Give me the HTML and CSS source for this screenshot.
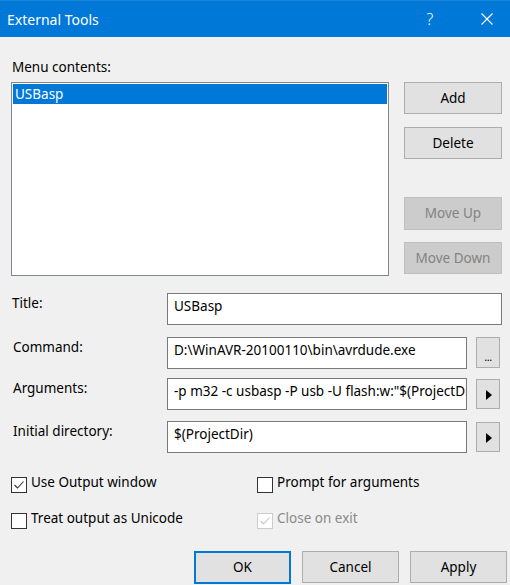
FILE: index.html
```html
<!DOCTYPE html>
<html>
<head>
<meta charset="utf-8">
<title>External Tools</title>
<link rel="stylesheet" href="styles.css">
</head>
<body>
<div class="dialog">
  <div class="titlebar">
    <span class="title">External Tools</span>
    <span class="help">?</span>
    <span class="close">
      <svg width="12" height="12" viewBox="0 0 12 12"><path d="M0.5 0.5 L11.5 11.5 M11.5 0.5 L0.5 11.5" stroke="#fff" stroke-width="1.1" fill="none"/></svg>
    </span>
  </div>
  <div class="content">
    <div class="menu-label">Menu contents:</div>
    <div class="menu-row">
      <div class="listbox">
        <div class="item selected">USBasp</div>
      </div>
      <div class="side-buttons">
        <button class="btn">Add</button>
        <button class="btn btn-delete">Delete</button>
        <button class="btn disabled btn-up">Move Up</button>
        <button class="btn disabled btn-down">Move Down</button>
      </div>
    </div>

    <div class="form">
      <div class="row">
        <div class="label label-title">Title:</div>
        <div class="field wide">USBasp</div>
      </div>
      <div class="row row-command">
        <div class="label">Command:</div>
        <div class="field narrow">D:\WinAVR-20100110\bin\avrdude.exe</div>
        <button class="small-btn dots">...</button>
      </div>
      <div class="row row-args">
        <div class="label">Arguments:</div>
        <div class="field narrow">-p m32 -c usbasp -P usb -U flash:w:"$(ProjectDir)Default\$(ProjectName).hex":i</div>
        <button class="small-btn arrow-btn"><svg width="6" height="10" viewBox="0 0 6 10"><path d="M0 0 L6 5 L0 10 Z" fill="#000"/></svg></button>
      </div>
      <div class="row row-dir">
        <div class="label">Initial directory:</div>
        <div class="field narrow">$(ProjectDir)</div>
        <button class="small-btn arrow-btn"><svg width="6" height="10" viewBox="0 0 6 10"><path d="M0 0 L6 5 L0 10 Z" fill="#000"/></svg></button>
      </div>
    </div>

    <div class="checks">
      <div class="check">
        <span class="box"><svg width="14" height="14" viewBox="0 0 14 14"><path d="M2.5 7 L5.5 10 L11.5 3.5" stroke="#333" stroke-width="1.1" fill="none"/></svg></span>
        <span>Use Output window</span>
      </div>
      <div class="check">
        <span class="box"></span>
        <span>Prompt for arguments</span>
      </div>
      <div class="check">
        <span class="box"></span>
        <span>Treat output as Unicode</span>
      </div>
      <div class="check check-disabled">
        <span class="box"><svg width="14" height="14" viewBox="0 0 14 14"><path d="M2.5 7 L5.5 10 L11.5 3.5" stroke="#c4c4c4" stroke-width="1.1" fill="none"/></svg></span>
        <span>Close on exit</span>
      </div>
    </div>

    <div class="footer">
      <button class="btn foot-btn default">OK</button>
      <button class="btn foot-btn">Cancel</button>
      <button class="btn foot-btn">Apply</button>
    </div>
  </div>
</div>
</body>
</html>
```

FILE: styles.css
```css
html, body {
  margin: 0;
  padding: 0;
  background: #f0f0f0;
}

.dialog {
  width: 510px;
  height: 585px;
  overflow: hidden;
  background: #f0f0f0;
  font-family: "Noto Sans", "Open Sans", sans-serif;
  font-size: 13.5px;
  line-height: 19px;
  color: #000;
}

.titlebar {
  height: 36px;
  border-top: 1px solid #1a84d9;
  background: #0078d7;
  color: #fff;
  display: flex;
  align-items: center;
  font-size: 14px;
}

.title {
  flex: 1;
  margin-left: 7px;
}

.help {
  width: 46px;
  text-align: center;
  font-size: 16px;
  font-weight: 300;
}

.close {
  width: 46px;
  margin-left: 11px;
  display: flex;
  justify-content: center;
  align-items: center;
}

.content {
  padding: 0 3px 0 11px;
}

.menu-label {
  margin-top: 21px;
  padding-left: 1px;
}

.menu-row {
  display: flex;
  margin-top: 5px;
  height: 194px;
}

.listbox {
  box-sizing: border-box;
  width: 378px;
  height: 194px;
  border: 1px solid #828790;
  background: #fff;
  padding: 1px;
}

.item {
  height: 20px;
  line-height: 20px;
  padding-left: 2px;
}

.item.selected {
  background: #0078d7;
  color: #fff;
}

.side-buttons {
  display: flex;
  flex-direction: column;
  margin-left: 15px;
}

.btn {
  box-sizing: border-box;
  width: 98px;
  height: 32px;
  background: #e1e1e1;
  border: 1px solid #adadad;
  font: inherit;
  color: #000;
  padding: 0;
  margin: 0;
  text-align: center;
}

.btn-delete { margin-top: 13px; }
.btn-up { margin-top: 38px; height: 33px; }
.btn-down { margin-top: 12px; }

.btn.disabled {
  background: #cccccc;
  border-color: #bfbfbf;
  color: #838383;
}

.form {
  margin-top: 17px;
}

.row {
  display: flex;
  align-items: flex-start;
  height: 32px;
}

.row-command { margin-top: 12px; }
.row-args { margin-top: 9px; }
.row-dir { margin-top: 11px; }

.label {
  box-sizing: border-box;
  width: 156px;
  padding-top: 1px;
  padding-left: 2px;
}

.label-title {
  padding-left: 1px;
}

.field {
  box-sizing: border-box;
  height: 32px;
  border: 1px solid #7a7a7a;
  background: #fff;
  padding: 3px 5px 0 6px;
  white-space: nowrap;
  overflow: hidden;
}

.field.wide { width: 335px; }
.field.narrow { width: 300px; }

.small-btn {
  box-sizing: border-box;
  width: 24px;
  height: 31px;
  margin: 0 0 0 9px;
  padding: 0;
  background: #e1e1e1;
  border: 1px solid #adadad;
  font: inherit;
  color: #000;
  display: flex;
  justify-content: center;
  align-items: center;
}

.row-args .small-btn,
.row-dir .small-btn {
  margin-top: 1px;
  height: 30px;
}

.dots {
  font-size: 11px;
  line-height: 11px;
  padding-top: 8px;
  letter-spacing: -0.5px;
}

.arrow-btn svg {
  margin-top: 2px;
  margin-left: 1px;
}

.checks {
  display: grid;
  grid-template-columns: 246px auto;
  row-gap: 16px;
  margin-top: 20px;
}

.check {
  display: flex;
  align-items: flex-start;
}

.box {
  box-sizing: border-box;
  width: 16px;
  height: 16px;
  margin-top: 4px;
  margin-right: 4px;
  border: 1px solid #333;
  background: #fff;
  display: flex;
  align-items: center;
  justify-content: center;
}

.check-disabled {
  color: #8a8a8a;
}

.check-disabled .box {
  border-color: #cccccc;
}

.footer {
  display: flex;
  justify-content: flex-end;
  gap: 11px;
  margin-top: 22px;
}

.foot-btn {
  width: 97px;
}

.foot-btn.default {
  height: 33px;
  border: 2px solid #0078d7;
}
```
